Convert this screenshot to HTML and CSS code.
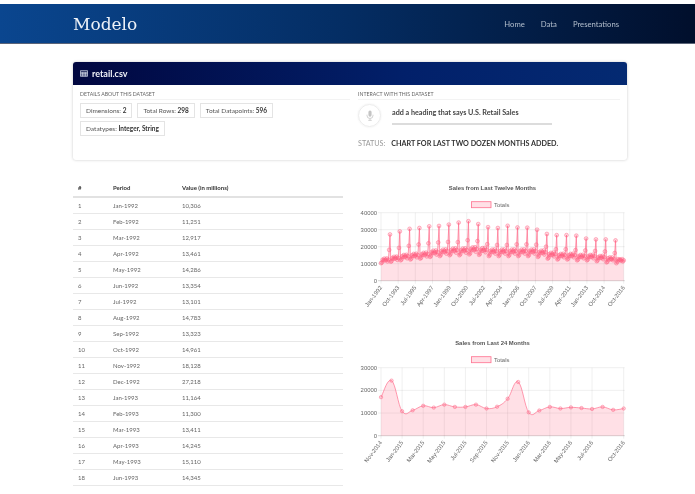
FILE: index.html
```html
<!DOCTYPE html>
<html lang="en">
<head>
<meta charset="utf-8">
<title>Modelo</title>
<link rel="stylesheet" href="styles.css">
</head>
<body>
<nav class="navbar">
  <a class="brand">Modelo</a>
  <ul class="nav-links">
    <li>Home</li>
    <li>Data</li>
    <li>Presentations</li>
  </ul>
</nav>
<main class="page">
  <section class="card">
    <header class="card-head">
      <svg class="table-icon" viewBox="0 0 10 8" width="8" height="7"><path d="M.5.5h9v7h-9zM.5 2.5h9M.5 4.2h9M.5 5.9h9M3.4 2.5v5M6.6 2.5v5" fill="none" stroke="#dfe6f2" stroke-width=".9"/></svg>
      <span>retail.csv</span>
    </header>
    <div class="card-body">
      <div class="details">
        <h4 class="section-label">DETAILS ABOUT THIS DATASET</h4>
        <div class="badges">
          <span class="badge">Dimensions: <b>2</b></span>
          <span class="badge">Total Rows: <b>298</b></span>
          <span class="badge">Total Datapoints: <b>596</b></span>
          <span class="badge">Datatypes: <b>Integer, String</b></span>
        </div>
      </div>
      <div class="interact">
        <h4 class="section-label">INTERACT WITH THIS DATASET</h4>
        <div class="voice">
          <span class="mic">
            <svg viewBox="0 0 10 14" width="8" height="11"><rect x="3" y="0.5" width="4" height="8" rx="2" fill="#c4c4c4"/><path d="M1.2 6v1a3.8 3.8 0 0 0 7.6 0V6M5 11v2M2.8 13.2h4.4" fill="none" stroke="#c4c4c4" stroke-width="1"/></svg>
          </span>
          <p class="utterance">add a heading that says U.S. Retail Sales</p>
        </div>
        <p class="status"><span class="status-label">STATUS:</span> <span class="status-text">CHART FOR LAST TWO DOZEN MONTHS ADDED.</span></p>
      </div>
    </div>
  </section>
  <section class="data-row">
    <table class="data-table">
      <thead><tr><th class="c1">#</th><th class="c2">Period</th><th>Value (in millions)</th></tr></thead>
      <tbody>
        <tr><td>1</td><td>Jan-1992</td><td>10,306</td></tr>
        <tr><td>2</td><td>Feb-1992</td><td>11,251</td></tr>
        <tr><td>3</td><td>Mar-1992</td><td>12,917</td></tr>
        <tr><td>4</td><td>Apr-1992</td><td>13,461</td></tr>
        <tr><td>5</td><td>May-1992</td><td>14,286</td></tr>
        <tr><td>6</td><td>Jun-1992</td><td>13,354</td></tr>
        <tr><td>7</td><td>Jul-1992</td><td>13,101</td></tr>
        <tr><td>8</td><td>Aug-1992</td><td>14,783</td></tr>
        <tr><td>9</td><td>Sep-1992</td><td>13,323</td></tr>
        <tr><td>10</td><td>Oct-1992</td><td>14,961</td></tr>
        <tr><td>11</td><td>Nov-1992</td><td>18,128</td></tr>
        <tr><td>12</td><td>Dec-1992</td><td>27,218</td></tr>
        <tr><td>13</td><td>Jan-1993</td><td>11,164</td></tr>
        <tr><td>14</td><td>Feb-1993</td><td>11,300</td></tr>
        <tr><td>15</td><td>Mar-1993</td><td>13,411</td></tr>
        <tr><td>16</td><td>Apr-1993</td><td>14,245</td></tr>
        <tr><td>17</td><td>May-1993</td><td>15,110</td></tr>
        <tr><td>18</td><td>Jun-1993</td><td>14,345</td></tr>
      </tbody>
    </table>
    <div class="charts">
      <svg id="chart-year" class="chart" viewBox="0 0 282 155" width="282" height="155"></svg>
      <svg id="chart-months" class="chart" viewBox="0 0 282 155" width="282" height="155"></svg>
    </div>
  </section>
</main>
<script src="charts.js"></script>
</body>
</html>
```

FILE: styles.css
```css
* { box-sizing: border-box; }
html, body { margin: 0; background: #fff; overflow: hidden; }
body { height: 494px; padding-top: 4px; font-family: Lato, "Noto Sans", sans-serif; color: #333; filter: blur(.3px); }
.navbar {
  height: 40px;
  padding: 0 76px 0 73px;
  display: flex;
  align-items: center;
  justify-content: space-between;
  background: linear-gradient(90deg, #0a468f 0%, #042d63 50%, #010f2c 100%);
  border-bottom: 1px solid #5b6478;
}
.brand { font-family: "DejaVu Serif", serif; font-size: 17px; color: #eef2f8; }
.nav-links { display: flex; gap: 16px; margin: 0; padding: 0; list-style: none; font-size: 7.7px; color: #b4bfcd; }
.page { padding: 18px 68px 0 73px; }
.card {
  height: 98px;
  border-radius: 3px;
  background: #fff;
  box-shadow: 0 0 3px rgba(0,0,0,.22);
}
.card-head {
  height: 23px;
  padding: 0 7px;
  display: flex;
  align-items: center;
  gap: 4px;
  border-radius: 3px 3px 0 0;
  background: linear-gradient(90deg, #010740 0%, #02206a 60%, #042a72 100%);
  color: #f1f3f8;
  font-size: 9px;
  font-weight: 700;
}
.card-body { display: grid; grid-template-columns: 278px 1fr; padding: 5px 7px 0; }
.section-label {
  margin: 0;
  padding-bottom: 1px;
  border-bottom: 1px solid #f3f3f3;
  font-size: 5.2px;
  font-weight: 400;
  line-height: 8px;
  color: #666;
}
.details .section-label { margin-right: 8px; }
.badges { display: flex; flex-wrap: wrap; gap: 3px 5px; margin-top: 3px; width: 215px; }
.badge {
  height: 15px;
  padding: 0 5px;
  display: flex;
  align-items: center;
  border: 1px solid #e4e4e4;
  font-size: 6.5px;
  color: #555;
  white-space: pre;
}
.badge b { color: #333; }
.voice { display: flex; gap: 11px; margin-top: 4px; }
.mic {
  width: 23px;
  height: 23px;
  flex: none;
  display: flex;
  align-items: center;
  justify-content: center;
  border-radius: 50%;
  border: 1px solid #ececec;
  box-shadow: 0 0 2px rgba(0,0,0,.08);
}
.utterance {
  width: 160px;
  height: 21px;
  margin: 0;
  border-bottom: 2px solid #dcdcdc;
  font-size: 7.2px;
  font-weight: 700;
  line-height: 17px;
  color: #444;
}
.status { display: flex; gap: 6px; margin: 12px 0 0; font-size: 7.2px; line-height: 10px; }
.status-label { color: #999; }
.status-text { color: #333; font-weight: 700; }
.data-row { display: grid; grid-template-columns: 270px 282px; column-gap: 2px; margin-top: 19px; }
.data-table { width: 270px; height: 306px; border-collapse: collapse; table-layout: fixed; font-size: 6px; color: #666; align-self: start; }
.data-table th { height: 18px; text-align: left; padding: 0 0 0 5px; font-weight: 700; color: #333; border-bottom: 2px solid #e2e2e2; }
.data-table th.c1 { width: 35px; }
.data-table th.c2 { width: 69px; }
.data-table td { height: 16px; padding: 0 0 0 5px; border-bottom: 1px solid #e8e8e8; }
.charts { display: flex; flex-direction: column; }
.chart { display: block; }
.chart-title { font: 700 5.9px "Liberation Sans", sans-serif; fill: #555; text-anchor: middle; }
.chart-tick { font: 5.9px "Liberation Sans", sans-serif; fill: #666; }
.tick-y { text-anchor: end; }
.tick-x { text-anchor: end; }
.grid-line { stroke: rgba(0,0,0,.09); stroke-width: .7; }
.zero-line { stroke: rgba(0,0,0,.25); stroke-width: .7; }
.legend-box { fill: rgba(255,99,132,.2); stroke: rgba(255,99,132,.9); stroke-width: .8; }
.area { fill: rgba(255,99,132,.2); stroke: none; }
.series { fill: none; stroke: rgba(255,99,132,.8); stroke-width: .8; }
.point { fill: rgba(255,99,132,.25); stroke: rgba(255,99,132,.75); stroke-width: .6; }
```

FILE: charts.js
```js
var NS = 'http://www.w3.org/2000/svg';
var L = 36, R = 278.7, TOP = 33.7, ZERO = 101.7;

function add(svg, tag, attrs, text) {
  var el = document.createElementNS(NS, tag);
  for (var k in attrs) el.setAttribute(k, attrs[k]);
  if (text) el.textContent = text;
  svg.appendChild(el);
  return el;
}

function fmtMonth(i, start) {
  var names = ['Jan','Feb','Mar','Apr','May','Jun','Jul','Aug','Sep','Oct','Nov','Dec'];
  var m = start + i;
  return names[m % 12] + '-' + (1992 + Math.floor(m / 12));
}

function drawFrame(svg, title, max, ticks, labelIdx, count, start) {
  add(svg, 'text', { 'class': 'chart-title', x: 147.5, y: 11.3 }, title);
  add(svg, 'rect', { 'class': 'legend-box', x: 126.5, y: 22.7, width: 19.5, height: 6 });
  add(svg, 'text', { 'class': 'chart-tick', x: 149, y: 27.8 }, 'Totals');
  var n = ticks;
  for (var t = 0; t <= n; t++) {
    var v = max * t / n;
    var y = ZERO - (ZERO - TOP) * t / n;
    add(svg, 'line', { 'class': t ? 'grid-line' : 'zero-line', x1: L - 3, x2: R + 1, y1: y, y2: y });
    add(svg, 'text', { 'class': 'chart-tick tick-y', x: L - 4, y: y + 2.1 }, String(v));
  }
  labelIdx.forEach(function (i) {
    var x = L + (R - L) * i / (count - 1);
    add(svg, 'line', { 'class': 'grid-line', x1: x, x2: x, y1: TOP, y2: ZERO + 3 });
    add(svg, 'text', { 'class': 'chart-tick tick-x', x: x + 1.5, y: ZERO + 7, transform: 'rotate(-53 ' + (x + 1.5) + ' ' + (ZERO + 7) + ')' }, fmtMonth(i, start));
  });
}

function project(values, max) {
  return values.map(function (v, i) {
    return [L + (R - L) * i / (values.length - 1), ZERO - (ZERO - TOP) * v / max];
  });
}

function straightPath(p) {
  return p.map(function (q, i) { return (i ? 'L' : 'M') + q[0].toFixed(2) + ' ' + q[1].toFixed(2); }).join('');
}

function smoothPath(p) {
  var d = 'M' + p[0][0].toFixed(2) + ' ' + p[0][1].toFixed(2);
  for (var i = 0; i < p.length - 1; i++) {
    var a = p[Math.max(i - 1, 0)], b = p[i], c = p[i + 1], e = p[Math.min(i + 2, p.length - 1)];
    var k = 0.2;
    d += 'C' + (b[0] + (c[0] - a[0]) * k).toFixed(2) + ' ' + (b[1] + (c[1] - a[1]) * k).toFixed(2) + ' ' +
         (c[0] - (e[0] - b[0]) * k).toFixed(2) + ' ' + (c[1] - (e[1] - b[1]) * k).toFixed(2) + ' ' +
         c[0].toFixed(2) + ' ' + c[1].toFixed(2);
  }
  return d;
}

function drawSeries(svg, p, path, r) {
  var first = p[0], last = p[p.length - 1];
  add(svg, 'path', { 'class': 'area', d: path + 'L' + last[0] + ' ' + ZERO + 'L' + first[0] + ' ' + ZERO + 'Z' });
  add(svg, 'path', { 'class': 'series', d: path });
  p.forEach(function (q) { add(svg, 'circle', { 'class': 'point', cx: q[0], cy: q[1], r: r }); });
}

var SEASON = [1, 1.04, 1.2, 1.16, 1.26, 1.16, 1.2, 1.27, 1.1, 1.2];
var JAN = [10306, 11164, 12000, 12500, 13000, 14000, 14500, 15000, 15000, 15500, 15200, 14500, 14500, 14500, 14500, 14500, 14000, 13000, 12500, 12500, 12000, 12000, 11500];
var NOV = [18128, 19300, 20500, 21300, 22000, 22500, 22800, 22700, 23800, 23300, 21500, 21000, 21000, 21400, 21400, 21200, 20000, 18500, 18500, 18000, 17800, 17500, 17200];
var DEC = [27218, 29000, 30500, 31000, 32000, 32200, 33000, 34200, 35000, 33300, 31500, 31000, 32300, 31300, 31200, 30000, 27500, 26800, 26800, 26500, 24800, 24300, 24300];
var LAST24 = [17000, 24300, 10800, 11200, 13200, 12400, 13700, 12700, 12700, 13700, 12000, 12800, 16300, 23700, 10300, 11100, 12700, 12000, 12500, 12200, 11800, 12700, 11400, 12000];

var all = [];
JAN.forEach(function (jan, y) {
  SEASON.forEach(function (s) { all.push(Math.round(jan * s)); });
  all.push(NOV[y], DEC[y]);
});
/* 2015 and 2016 come from the detailed series. */
all = all.concat(LAST24.slice(2));

var yearSvg = document.getElementById('chart-year');
drawFrame(yearSvg, 'Sales from Last Twelve Months', 40000, 4,
  [0, 21, 42, 63, 84, 105, 126, 147, 168, 189, 210, 231, 252, 273, 297], 298, 0);
var yp = project(all.slice(0, 298), 40000);
drawSeries(yearSvg, yp, straightPath(yp), 1.9);

var monthSvg = document.getElementById('chart-months');
drawFrame(monthSvg, 'Sales from Last 24 Months', 30000, 3,
  [0, 2, 4, 6, 8, 10, 12, 14, 16, 18, 20, 23], 24, 274);
var mp = project(LAST24, 30000);
drawSeries(monthSvg, mp, smoothPath(mp), 1.7);
```
